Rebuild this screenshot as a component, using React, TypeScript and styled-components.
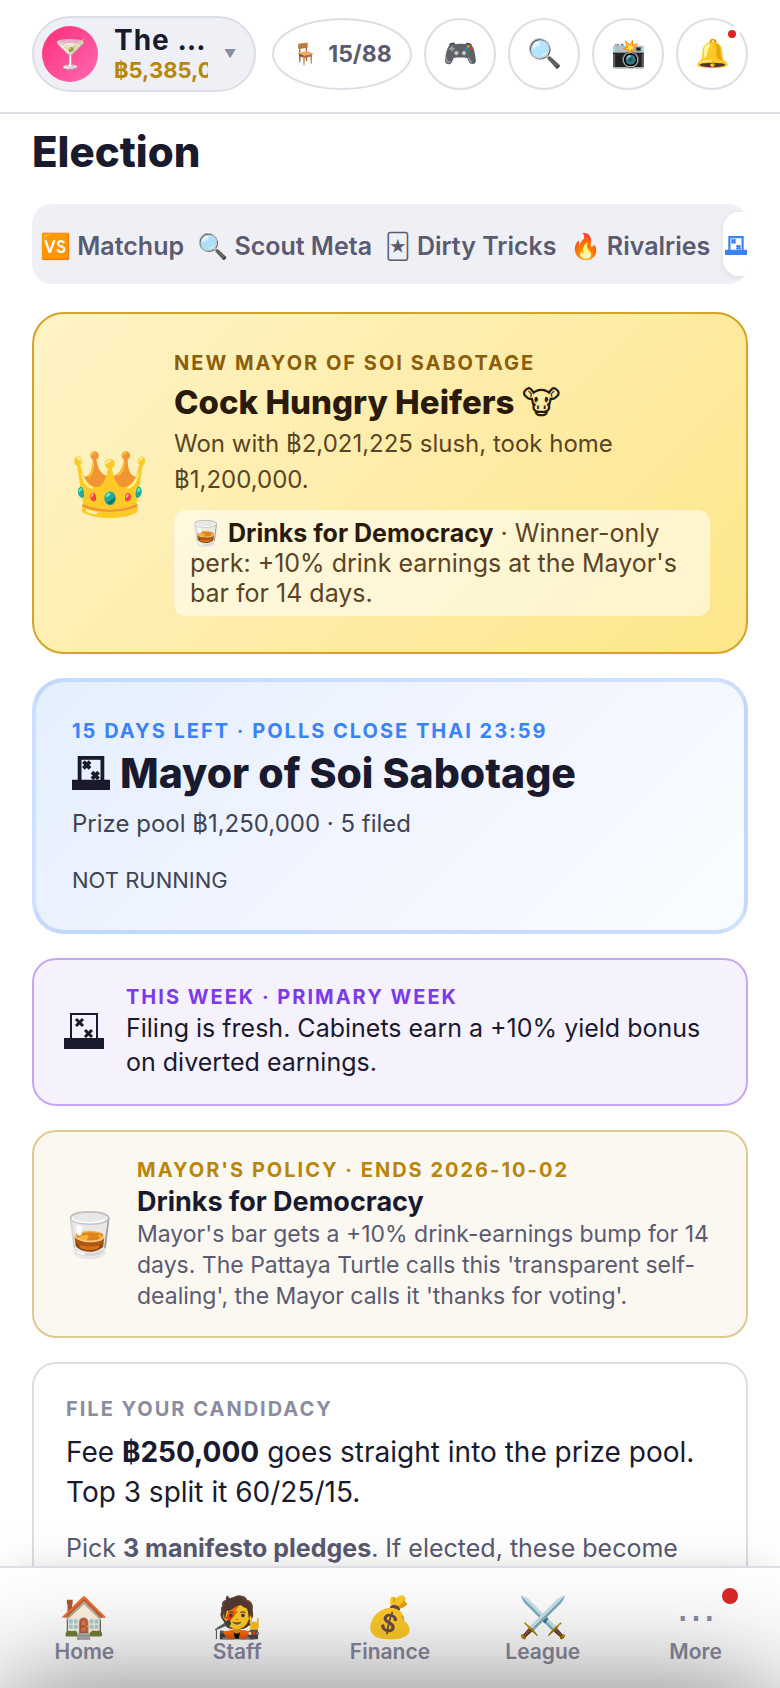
import React from "react";
import styled, { createGlobalStyle } from "styled-components";

const GlobalStyle = createGlobalStyle`
  *, *::before, *::after { box-sizing: border-box; }
  body {
    margin: 0;
    background: #fff;
    color: #1a1a2e;
    font-family: Inter, "Noto Sans", sans-serif;
    font-size: 28px;
    line-height: 1.4;
  }
  html, body { overflow: hidden; }
  button { font: inherit; color: inherit; padding: 0; margin: 0; cursor: pointer; }
  h1, h2, h3, p { margin: 0; }
`;

const Page = styled.div`
  height: 100vh;
  display: flex;
  flex-direction: column;
  overflow: hidden;
`;

const Header = styled.header`
  flex: none;
  display: flex;
  align-items: center;
  gap: 12px;
  padding: 16px 32px 20px;
  border-bottom: 2px solid #dcdfe6;
`;

const BarPicker = styled.button`
  flex: 1;
  min-width: 0;
  display: flex;
  align-items: center;
  height: 76px;
  margin-right: 4px;
  padding: 0 20px 0 8px;
  border: 2px solid #dcdee6;
  border-radius: 38px;
  background: #eff0f5;
  text-align: left;
`;

const Avatar = styled.span`
  flex: none;
  display: grid;
  place-items: center;
  width: 56px;
  height: 56px;
  margin-right: 16px;
  border-radius: 50%;
  background: linear-gradient(135deg, #ff2d78, #ff69b4);
  font-size: 28px;
  line-height: 32px;
`;

const BarInfo = styled.span`
  flex: 1;
  min-width: 0;
  overflow: hidden;
`;

const BarName = styled.span`
  display: block;
  overflow: hidden;
  white-space: nowrap;
  text-overflow: ellipsis;
  font-size: 28px;
  font-weight: 700;
  line-height: 32px;
  letter-spacing: 1px;
`;

const BarCash = styled.span`
  display: block;
  overflow: hidden;
  white-space: nowrap;
  color: #b8860b;
  font-size: 22px;
  font-weight: 700;
  line-height: 28px;
`;

const Caret = styled.span`
  flex: none;
  width: 10px;
  margin-left: 16px;
  color: #8a8ca0;
  font-size: 12px;
`;

const RoundButton = styled.button<{ $wide?: boolean }>`
  position: relative;
  flex: none;
  display: flex;
  align-items: center;
  justify-content: center;
  gap: 10px;
  width: ${(p) => (p.$wide ? 140 : 72)}px;
  height: 72px;
  border: 2px solid #dcdee6;
  border-radius: 50%;
  background: #fff;
  color: #5a5a70;
  font-size: ${(p) => (p.$wide ? 23 : 28)}px;
  font-weight: 700;
`;

const SmallEmoji = styled.span`
  font-size: 21px;
`;

const AlertDot = styled.span<{ $large?: boolean }>`
  position: absolute;
  top: ${(p) => (p.$large ? 20 : 10)}px;
  right: ${(p) => (p.$large ? 34 : 10)}px;
  width: ${(p) => (p.$large ? 16 : 8)}px;
  height: ${(p) => (p.$large ? 16 : 8)}px;
  border-radius: 50%;
  background: #dc2626;
  box-shadow: 0 0 0 ${(p) => (p.$large ? 0 : 4)}px #fff;
`;

const Main = styled.main`
  flex: 1;
  min-height: 0;
  overflow: hidden;
  padding: 12px 32px 0;
`;

const Title = styled.h1`
  font-size: 42px;
  font-weight: 800;
  line-height: 52px;
`;

const Tabs = styled.nav`
  display: flex;
  align-items: center;
  gap: 11px;
  height: 80px;
  margin: 26px 0 28px;
  padding: 8px;
  border-radius: 20px;
  background: #eff0f5;
  overflow: hidden;
`;

const Tab = styled.button<{ $active?: boolean }>`
  flex: none;
  min-width: 120px;
  height: 64px;
  padding: 3px 2px 0 0;
  border: 0;
  border-radius: 16px;
  background: ${(p) => (p.$active ? "#fff" : "transparent")};
  box-shadow: ${(p) => (p.$active ? "0 2px 6px rgba(0, 0, 0, 0.08)" : "none")};
  color: ${(p) => (p.$active ? "#3b82f6" : "#5a5a70")};
  font-size: 25px;
  font-weight: 600;
  line-height: 30px;
  white-space: nowrap;
`;

const TabIcon = styled.span`
  display: flex;
  padding-left: 2px;
`;

const LineGlyph = styled.span`
  font-family: "DejaVu Sans", sans-serif;
  font-weight: 400;
  line-height: 1;
`;

const Stack = styled.div`
  display: flex;
  flex-direction: column;
  gap: 24px;
`;

const Card = styled.section`
  display: flex;
  align-items: center;
  border: 2px solid #dcdee6;
  border-radius: 24px;
`;

const WinnerCard = styled(Card)`
  gap: 24px;
  padding: 35px 36px 36px;
  border-color: #d4a328;
  border-radius: 32px;
  background: linear-gradient(135deg, #fef3c7, #fde68a);
`;

const RaceCard = styled(Card)`
  display: block;
  padding: 35px 36px 32px;
  border: 4px solid rgba(59, 130, 246, 0.22);
  border-radius: 32px;
  background: linear-gradient(135deg, #e4effd, #edf3ff 35%, #f3f6ff 60%, #f9fcff);
`;

const WeekCard = styled(Card)`
  gap: 20px;
  padding: 23px 28px 25px;
  border-color: #c4a6f5;
  background: #f5f2fe;
`;

const PolicyCard = styled(Card)`
  gap: 20px;
  padding: 24px 28px;
  border-color: #dfc98f;
  background: #fbf8f1;
`;

const FilingCard = styled(Card)`
  display: block;
  padding: 31px 32px;
`;

const CardIcon = styled.span<{ $size: number }>`
  flex: none;
  font-size: ${(p) => p.$size}px;
  line-height: 1;
`;

const WeekIcon = styled.span`
  flex: none;
  display: flex;
  justify-content: center;
  width: 44px;
`;

const CardBody = styled.div`
  flex: 1;
  min-width: 0;
`;

const Eyebrow = styled.p<{ $color: string }>`
  color: ${(p) => p.$color};
  font-size: 20px;
  font-weight: 700;
  line-height: 28px;
  letter-spacing: 2px;
  text-transform: uppercase;
`;

const WinnerName = styled.h2`
  margin: 3px 0 2px;
  color: #2a1a0a;
  font-size: 33px;
  font-weight: 800;
  line-height: 44px;
`;

const WinnerText = styled.p`
  color: #5c4423;
  font-size: 24px;
  line-height: 36px;
`;

const Perk = styled.p`
  margin-top: 12px;
  padding: 8px 16px;
  border-radius: 12px;
  background: rgba(255, 255, 255, 0.55);
  color: #5c4423;
  font-size: 25px;
  line-height: 30px;
  strong { color: #2a1a0a; }
`;

const RaceName = styled.h2`
  display: flex;
  align-items: center;
  gap: 10px;
  margin: 4px 0 9px;
  font-size: 41px;
  font-weight: 800;
  line-height: 48px;
`;

const RaceText = styled.p`
  color: #414355;
  font-size: 24px;
  line-height: 36px;
`;

const RaceStatus = styled.p`
  margin-top: 20px;
  color: #414355;
  font-size: 22px;
  line-height: 36px;
`;

const WeekText = styled.p`
  font-size: 25px;
  line-height: 34px;
`;

const PolicyName = styled.h3`
  font-size: 27px;
  font-weight: 700;
  line-height: 35px;
`;

const PolicyText = styled.p`
  color: #5a5a70;
  font-size: 23px;
  line-height: 31px;
`;

const FilingText = styled.p`
  margin-top: 9px;
  font-size: 28px;
  line-height: 40px;
`;

const FilingNote = styled.p`
  margin-top: 18px;
  color: #5a5a70;
  font-size: 25px;
  line-height: 36px;
`;

const BottomNav = styled.nav`
  position: relative;
  flex: none;
  display: flex;
  height: 122px;
  padding: 0 8px;
  border-top: 2px solid #dcdfe6;
  background: #fff;
  box-shadow: 0 -8px 36px -12px rgba(0, 0, 0, 0.16);
`;

const NavItem = styled.button`
  position: relative;
  flex: 1;
  display: flex;
  flex-direction: column;
  align-items: center;
  padding-top: 28px;
  border: 0;
  background: transparent;
  color: #8a8ca0;
  font-size: 21px;
  font-weight: 600;
  line-height: 24px;
`;

const NavIcon = styled.span`
  height: 44px;
  font-size: 40px;
  font-weight: 400;
  line-height: 42px;
`;

const SheetShadow = styled.div`
  position: fixed;
  top: 100%;
  left: 0;
  right: 0;
  height: 400px;
  box-shadow: 0 0 112px rgba(0, 0, 0, 0.52);
  pointer-events: none;
`;

function BallotBox({ width, bold }: { width: number; bold?: boolean }) {
  const line = bold ? 4 : 2;
  return (
    <svg width={width} viewBox="0 0 40 36" fill="none" stroke="currentColor" aria-hidden="true">
      <rect x={6 + line / 2} y={line / 2} width={28 - line} height={26} strokeWidth={line} />
      <path d="M12 6l7 7M19 6l-7 7M21 17l7 7M28 17l-7 7" strokeWidth={bold ? 4 : 3} />
      <path d="M0 25h40v11H0z" fill="currentColor" stroke="none" />
    </svg>
  );
}

const tools = [
  ["🎮", "Games"],
  ["🔍", "Search"],
  ["📸", "Photos"],
];
const navItems = [
  ["🏠", "Home"],
  ["🧑‍🎤", "Staff"],
  ["💰", "Finance"],
  ["⚔️", "League"],
];

export default function App() {
  return (
    <Page>
      <GlobalStyle />
      <Header>
        <BarPicker>
          <Avatar>🍸</Avatar>
          <BarInfo>
            <BarName>The Pattaya Turtle</BarName>
            <BarCash>฿5,385,000</BarCash>
          </BarInfo>
          <Caret>▼</Caret>
        </BarPicker>
        <RoundButton $wide>
          <SmallEmoji>🪑</SmallEmoji>
          <span>15/88</span>
        </RoundButton>
        {tools.map(([icon, name]) => (
          <RoundButton key={name} aria-label={name}>{icon}</RoundButton>
        ))}
        <RoundButton aria-label="Alerts">
          🔔
          <AlertDot />
        </RoundButton>
      </Header>

      <Main>
        <Title>Election</Title>
        <Tabs>
          <Tab>🆚 Matchup</Tab>
          <Tab>🔍 Scout Meta</Tab>
          <Tab><LineGlyph>🃏</LineGlyph> Dirty Tricks</Tab>
          <Tab>🔥 Rivalries</Tab>
          <Tab $active aria-label="Election">
            <TabIcon><BallotBox width={22} bold /></TabIcon>
          </Tab>
        </Tabs>

        <Stack>
          <WinnerCard>
            <CardIcon $size={64}>👑</CardIcon>
            <CardBody>
              <Eyebrow $color="#8b5e0b">New Mayor of Soi Sabotage</Eyebrow>
              <WinnerName>Cock Hungry Heifers <LineGlyph>🐮</LineGlyph></WinnerName>
              <WinnerText>Won with ฿2,021,225 slush, took home ฿1,200,000.</WinnerText>
              <Perk>
                🥃 <strong>Drinks for Democracy</strong> · Winner-only perk: +10% drink
                earnings at the Mayor's bar for 14 days.
              </Perk>
            </CardBody>
          </WinnerCard>

          <RaceCard>
            <Eyebrow $color="#3b82f6">15 days left · Polls close Thai 23:59</Eyebrow>
            <RaceName><BallotBox width={38} bold /> Mayor of Soi Sabotage</RaceName>
            <RaceText>Prize pool ฿1,250,000 · 5 filed</RaceText>
            <RaceStatus>NOT RUNNING</RaceStatus>
          </RaceCard>

          <WeekCard>
            <WeekIcon><BallotBox width={40} /></WeekIcon>
            <CardBody>
              <Eyebrow $color="#7c3aed">This week · Primary week</Eyebrow>
              <WeekText>
                Filing is fresh. Cabinets earn a +10% yield bonus on diverted earnings.
              </WeekText>
            </CardBody>
          </WeekCard>

          <PolicyCard>
            <CardIcon $size={44}>🥃</CardIcon>
            <CardBody>
              <Eyebrow $color="#b8860b">Mayor's policy · Ends 2026-10-02</Eyebrow>
              <PolicyName>Drinks for Democracy</PolicyName>
              <PolicyText>
                Mayor's bar gets a +10% drink-earnings bump for 14 days. The Pattaya
                Turtle calls this 'transparent self-dealing', the Mayor calls it 'thanks
                for voting'.
              </PolicyText>
            </CardBody>
          </PolicyCard>

          <FilingCard>
            <Eyebrow $color="#8a8ca0">File your candidacy</Eyebrow>
            <FilingText>
              Fee <strong>฿250,000</strong> goes straight into the prize pool. Top 3
              split it 60/25/15.
            </FilingText>
            <FilingNote>
              Pick <strong>3 manifesto pledges</strong>. If elected, these become
            </FilingNote>
          </FilingCard>
        </Stack>
      </Main>

      <BottomNav>
        {navItems.map(([icon, name]) => (
          <NavItem key={name}>
            <NavIcon>{icon}</NavIcon>
            {name}
          </NavItem>
        ))}
        <NavItem>
          <NavIcon>⋯</NavIcon>
          More
          <AlertDot $large />
        </NavItem>
      </BottomNav>
      <SheetShadow />
    </Page>
  );
}
